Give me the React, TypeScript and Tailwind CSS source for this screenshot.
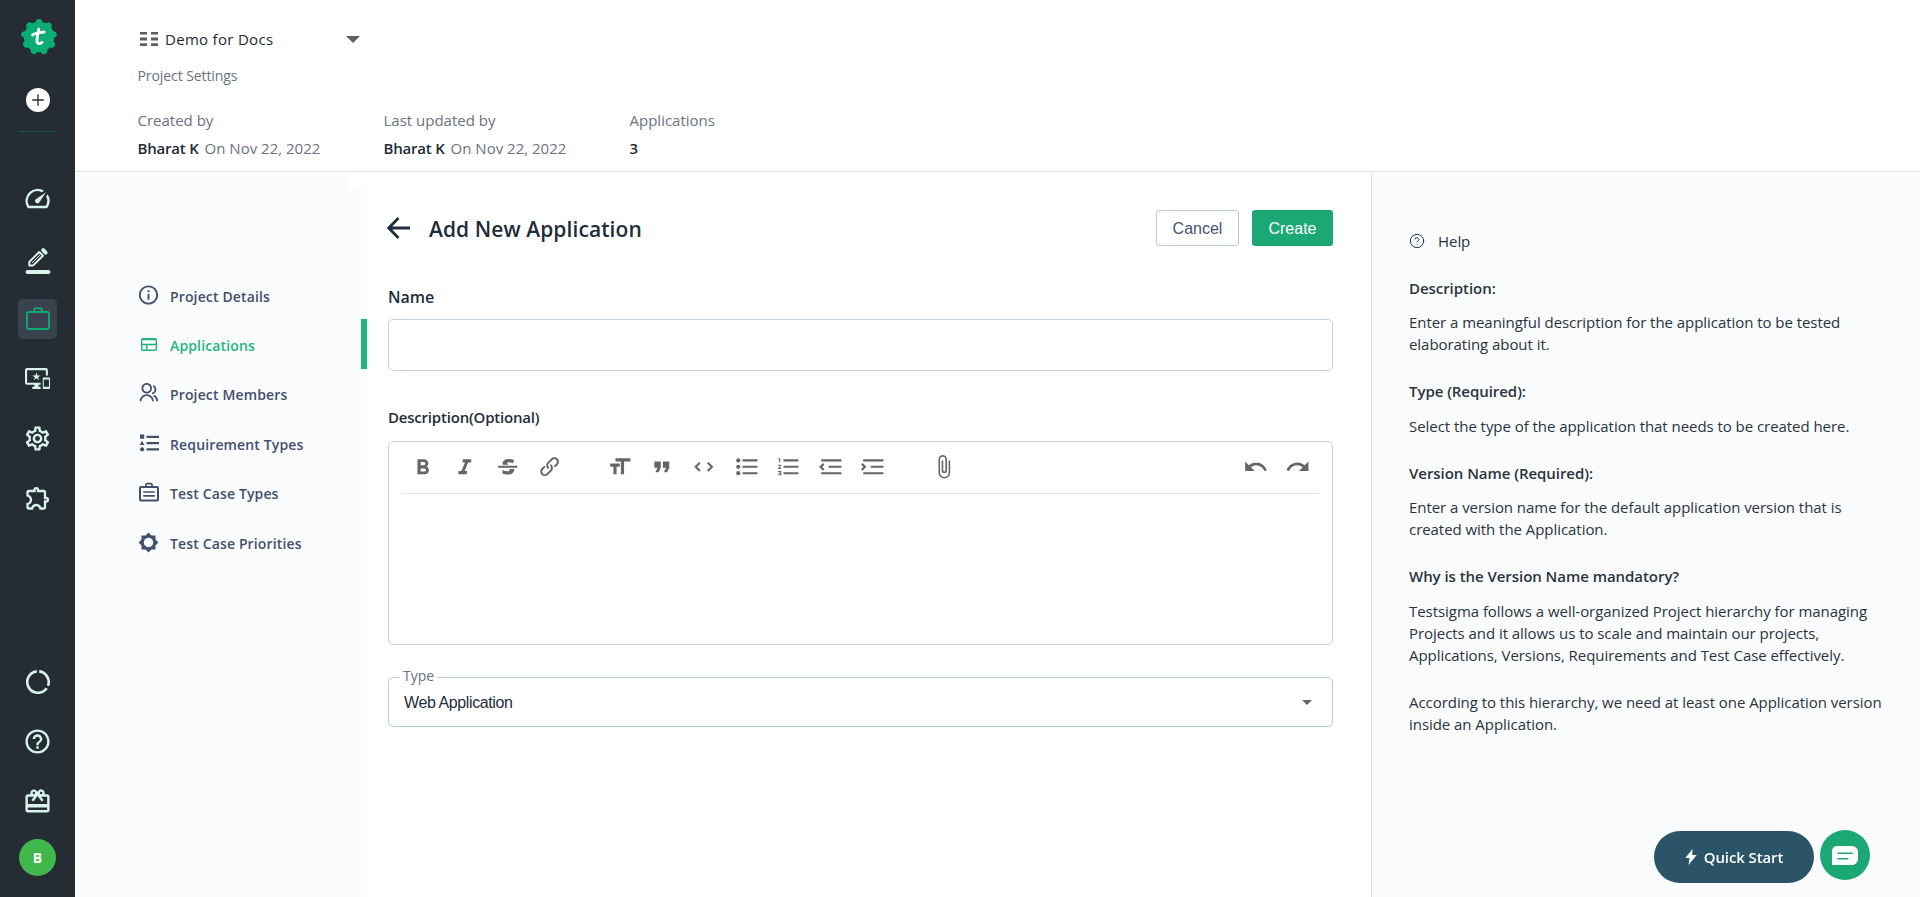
import { ReactNode } from "react";
import { CircleHelp } from "lucide-react";
import {
  MdHelpOutline,
  MdInfoOutline,
  MdOutlineCardGiftcard,
  MdOutlineExtension,
  MdOutlineImportantDevices,
  MdOutlineSettings,
  MdSpeed,
} from "react-icons/md";
import { RiGroupLine } from "react-icons/ri";

const TOOLS: Record<string, string> = {
  bold: "M15.6 11.8c1-.7 1.6-1.8 1.6-2.8a4 4 0 00-4-4H7v14h7c2.1 0 3.7-1.7 3.7-3.8 0-1.5-.8-2.8-2.1-3.4zM10 7.5h3a1.5 1.5 0 110 3h-3v-3zm3.5 9H10v-3h3.5a1.5 1.5 0 110 3z",
  italic: "M10 5v3h2.2l-3.4 8H6v3h8v-3h-2.2l3.4-8H18V5h-8z",
  strike:
    "M12.73 14l.28.14c.26.15.45.3.57.44.12.14.18.3.18.5 0 .3-.15.56-.44.75-.3.2-.76.3-1.39.3A13.52 13.52 0 017 14.95v3.37a10.64 10.64 0 004.84.88c1.26 0 2.35-.19 3.28-.56.93-.37 1.64-.9 2.14-1.57s.74-1.45.74-2.32c0-.26-.02-.51-.06-.75h-5.21zm-5.5-4c-.08-.34-.12-.7-.12-1.1 0-1.29.52-2.3 1.58-3.02 1.05-.72 2.5-1.08 4.34-1.08 1.62 0 3.28.34 4.97 1l-1.3 2.93c-1.47-.6-2.73-.9-3.8-.9-.55 0-.96.08-1.2.26-.26.17-.38.38-.38.64 0 .27.16.52.48.74.17.12.53.3 1.05.53H7.23zM3 13h18v-2H3v2z",
  link: "M9.88 13.7a4.3 4.3 0 010-6.07l3.37-3.37a4.26 4.26 0 016.07 0 4.3 4.3 0 010 6.06l-1.96 1.72a.91.91 0 11-1.3-1.3l1.97-1.71a2.46 2.46 0 00-3.48-3.48l-3.38 3.37a2.46 2.46 0 000 3.48.91.91 0 11-1.3 1.3zM4.25 19.46a4.3 4.3 0 010-6.07l1.93-1.9a.91.91 0 111.3 1.3l-1.93 1.9a2.46 2.46 0 003.48 3.48l3.37-3.38c.96-.96.96-2.52 0-3.48a.91.91 0 111.3-1.3 4.3 4.3 0 010 6.07l-3.38 3.38a4.26 4.26 0 01-6.07 0z",
  heading: "M12 9v3H9v7H6v-7H3V9h9zM8 4h14v3h-6v12h-3V7H8V4z",
  quote: "M6 17h3l2-4V7H5v6h3zm8 0h3l2-4V7h-6v6h3z",
  code: "M18.2 12L15 15.2l1.4 1.4L21 12l-4.6-4.6L15 8.8l3.2 3.2zM5.8 12L9 8.8 7.6 7.4 3 12l4.6 4.6L9 15.2 5.8 12z",
  bullets:
    "M4 4a2 2 0 100 4 2 2 0 000-4zm0 6a2 2 0 100 4 2 2 0 000-4zm0 6a2 2 0 100 4 2 2 0 000-4zm4 3h14v-2H8v2zm0-6h14v-2H8v2zm0-8v2h14V5H8z",
  numbers:
    "M2 17h2v.5H3v1h1v.5H2v1h3v-4H2v1zm1-9h1V4H2v1h1v3zm-1 3h1.8L2 13.1v.9h3v-1H3.2L5 10.9V10H2v1zm5-6v2h14V5H7zm0 14h14v-2H7v2zm0-6h14v-2H7v2z",
  outdent:
    "M3 19h19v-2H3v2zm7-6h12v-2H10v2zm-8.3-.3l2.8 2.9L6 14.2 4 12l2-2-1.4-1.5L1 12l.7.7zM3 5v2h19V5H3z",
  indent:
    "M3 19h19v-2H3v2zm7-6h12v-2H10v2zm-6.9-1L1 14.2l1.4 1.4L6 12l-.7-.7-2.8-2.8L1 9.9 3.1 12zM3 5v2h19V5H3z",
  attach:
    "M16.5 6v11.5a4 4 0 11-8 0V5a2.5 2.5 0 015 0v10.5a1 1 0 11-2 0V6H10v9.5a2.5 2.5 0 005 0V5a4 4 0 10-8 0v12.5a5.5 5.5 0 0011 0V6h-1.5z",
  undo: "M12.5 8c-2.6 0-5 1-6.9 2.6L2 7v9h9l-3.6-3.6A8 8 0 0120 16l2.4-.8a10.5 10.5 0 00-10-7.2z",
  redo: "M18.4 10.6a10.5 10.5 0 00-16.9 4.6L4 16a8 8 0 0112.7-3.6L13 16h9V7l-3.6 3.6z",
};

function Tool({ name }: { name: string }) {
  return (
    <button className="flex w-[42.2px] shrink-0 justify-center">
      <svg viewBox="0 0 24 24" className="size-[25.6px] fill-[#666666]">
        <path d={TOOLS[name]} />
      </svg>
    </button>
  );
}

function SideItem({ className = "", children }: { className?: string; children: ReactNode }) {
  return <div className={`flex size-10 shrink-0 items-center justify-center ${className}`}>{children}</div>;
}

function Logo() {
  const petals = [0, 40, 80, 120, 160, 200, 240, 280, 320];
  return (
    <svg viewBox="-18 -18 36 36" className="mt-px ml-[3px] size-9 shrink-0">
      <circle r="15.2" fill="#0aad74" />
      {petals.map((a) => (
        <circle key={a} cx="0" cy="-14.8" r="3.2" fill="#0aad74" transform={`rotate(${a})`} />
      ))}
      <path
        d="M-6.4-2C-5.4-3.8-2-4 5-5M-.2-7.8C-1.2-3.6-2-.4-2 3.4-2 7.4 1 7.2 3 5.4"
        fill="none"
        stroke="#fff"
        strokeWidth="2.9"
        strokeLinecap="round"
      />
    </svg>
  );
}

function Sidebar() {
  return (
    <aside className="flex w-[75px] shrink-0 flex-col items-center bg-[#252c34] pt-4 text-[#d9f3ea]">
      <SideItem>
        <Logo />
      </SideItem>
      <SideItem className="mt-6">
        <span className="flex size-6 items-center justify-center rounded-full bg-white">
          <svg viewBox="0 0 12 12" className="size-3 stroke-[#252c34]" strokeWidth="1.3">
            <path d="M6 .2v11.6M.2 6h11.6" />
          </svg>
        </span>
      </SideItem>
      <div className="mt-[11px] h-px w-[39px] bg-[#0d5646]" />
      <SideItem className="mt-[46px]">
        <MdSpeed size={29} />
      </SideItem>
      <SideItem className="mt-[23px]">
        <svg viewBox="0 0 26 28" className="h-7 w-[26px]" fill="none" stroke="currentColor">
          <path d="M4.3 18.6v-3.7L14.2 5l3.7 3.7-9.9 9.9z" strokeWidth="2" strokeLinejoin="round" />
          <path d="M7 16L15 8" strokeWidth="1" />
          <path d="M18.2 3.2l2.4 2.4" strokeWidth="4" strokeLinecap="round" />
          <path d="M2.5 25h21" strokeWidth="4" strokeLinecap="round" />
        </svg>
      </SideItem>
      <div className="mt-[18px] flex h-10 w-[39px] items-center justify-center rounded-[5px] bg-[#3a414f] text-[#0aad74]">
        <svg viewBox="0 0 24 24" className="size-6" fill="none" stroke="currentColor" strokeWidth="1.8">
          <rect x="1" y="5" width="22" height="17" rx="1.5" />
          <path d="M8.2 5V2.6c0-.8.5-1.3 1.3-1.3h5c.8 0 1.3.5 1.3 1.3V5" />
        </svg>
      </div>
      <SideItem className="mt-[19px]">
        <MdOutlineImportantDevices size={25} />
      </SideItem>
      <SideItem className="mt-5">
        <MdOutlineSettings size={29} />
      </SideItem>
      <SideItem className="mt-5">
        <MdOutlineExtension size={28} />
      </SideItem>
      <div className="grow" />
      <SideItem>
        <svg viewBox="-12 -12 24 24" className="size-6" fill="none" stroke="currentColor" strokeWidth="2.6">
          <path d="M1.2-10.6A10.7 10.7 0 0 1 10 3.8M8.7 6.2A10.7 10.7 0 1 1-1.2-10.6" />
        </svg>
      </SideItem>
      <SideItem className="mt-[19px]">
        <MdHelpOutline size={29} />
      </SideItem>
      <SideItem className="mt-5">
        <MdOutlineCardGiftcard size={29} />
      </SideItem>
      <SideItem className="mt-4 mb-5">
        <span className="flex size-[37px] items-center justify-center rounded-full bg-[#41b84b] text-[14px] font-bold text-white">
          B
        </span>
      </SideItem>
    </aside>
  );
}

function Author({ label }: { label: string }) {
  return (
    <div className="w-[246px]">
      <div className="h-6 leading-6">{label}</div>
      <div className="mt-1 flex h-6 gap-[6px] leading-6">
        <span className="font-semibold tracking-[-0.2px] text-[#212b36]">Bharat K</span>
        <span>On Nov 22, 2022</span>
      </div>
    </div>
  );
}

function Header() {
  return (
    <header className="h-[172px] shrink-0 border-b border-[#e1e3e6] bg-white pt-[27px] pl-[62.5px] text-[15px] text-[#6b7280]">
      <div className="flex h-6 items-center text-[#212b36]">
        <svg viewBox="0 0 18 14" className="mr-[7px] ml-[2.5px] h-[14px] w-[18px] fill-[#5f5f5f]">
          <path d="M0 0h7v2.6H0zM11 0h7v2.6h-7zM0 5.6h7v2.8H0zM11 5.6h7v2.8h-7zM0 11.3h7v2.7H0zM11 11.3h7v2.7h-7z" />
        </svg>
        <span className="tracking-[0.3px]">Demo for Docs</span>
        <svg viewBox="0 0 14 7" className="ml-[73px] h-[7px] w-[14px] fill-[#5f5f5f]">
          <path d="M0 0h14L7 7z" />
        </svg>
      </div>
      <div className="mt-[15px] h-5 text-[14px] leading-5 tracking-[-0.08px]">Project Settings</div>
      <div className="mt-[22px] flex">
        <Author label="Created by" />
        <Author label="Last updated by" />
        <div>
          <div className="h-6 leading-6">Applications</div>
          <div className="mt-1 h-6 leading-6 font-semibold text-[#212b36]">3</div>
        </div>
      </div>
    </header>
  );
}

const NAV = [
  { label: "Project Details", icon: <MdInfoOutline size={24} /> },
  {
    label: "Applications",
    active: true,
    icon: (
      <svg viewBox="0 0 16 13" className="mt-px h-[13px] w-4" fill="none" stroke="currentColor" strokeWidth="1.4">
        <rect x=".7" y=".7" width="14.6" height="11.6" rx="1" />
        <path d="M.7 1.5h14.6M.7 6.5h14.6M5.8 6.5v6" />
      </svg>
    ),
  },
  { label: "Project Members", icon: <RiGroupLine size={21} className="mb-px" /> },
  {
    label: "Requirement Types",
    icon: (
      <svg viewBox="0 0 20 18" className="h-[18px] w-5 fill-current">
        <path d="M1 .5h4.2v4.2H1zM3.1 6.7l2.4 4.3H.7zM7.5 1.8H20V4H7.5zM7.5 8H20v2.2H7.5zM7.5 14.2H20v2.2H7.5z" />
        <circle cx="3.1" cy="15.3" r="2.1" />
      </svg>
    ),
  },
  {
    label: "Test Case Types",
    icon: (
      <svg viewBox="0 0 20 20" className="size-5" fill="none" stroke="currentColor" strokeWidth="2">
        <rect x="1" y="5" width="18" height="13.5" rx="1" />
        <path d="M7 5V2.8c0-.8.4-1.2 1.2-1.2h3.6c.8 0 1.2.4 1.2 1.2V5M4.2 10h11.6M4.2 13.8h11.6" strokeWidth="1.7" />
      </svg>
    ),
  },
  {
    label: "Test Case Priorities",
    icon: (
      <svg viewBox="0 0 24 24" className="mt-[2px] size-[21px]">
        <path
          d="M20 15.3L23.3 12 20 8.7V4h-4.7L12 .7 8.7 4H4v4.7L.7 12 4 15.3V20h4.7l3.3 3.3 3.3-3.3H20z"
          fill="currentColor"
        />
        <circle cx="12" cy="12" r="5.4" fill="#fafbfd" />
      </svg>
    ),
  },
];

function ProjectNav() {
  return (
    <div className="flex w-[292px] shrink-0 flex-col bg-[#fafbfd]">
      <div className="ml-auto h-[17px] w-[17px] bg-white" />
      <nav className="pt-[81px]">
        {NAV.map((item) => (
          <div
            key={item.label}
            className={
              item.active
                ? "flex h-[49.4px] items-center border-r-[6px] border-[#1fb57e] pl-[62px] text-[#1fb57e]"
                : "flex h-[49.4px] items-center pl-[62px] text-[#43506b]"
            }
          >
            <span className="flex w-[23px] justify-center">{item.icon}</span>
            <span className="ml-[10px] pt-[3px] text-[14px] font-semibold tracking-[0.14px]">{item.label}</span>
          </div>
        ))}
      </nav>
    </div>
  );
}

function ApplicationForm() {
  return (
    <main className="flex grow flex-col pt-[38px] pr-[38px] pl-[21px] text-[#1f2d3a]">
      <div className="flex h-9 items-center">
        <svg viewBox="0 0 23 22" className="-ml-px h-[22px] w-[23px]" fill="none" stroke="currentColor" strokeWidth="2.8">
          <path d="M11.5 1L1.8 11l9.7 10M2 11h21" />
        </svg>
        <h1 className="ml-[19px] grow pt-[3px] text-[21px] font-semibold tracking-[0.08px]">Add New Application</h1>
        <button className="h-9 w-[83px] rounded-[3px] border border-[#b9cad8] pt-px font-['Liberation_Sans',sans-serif] text-base text-[#475270]">
          Cancel
        </button>
        <button className="ml-[13px] h-9 w-[81px] rounded-[3px] bg-[#1ba875] pt-px font-['Liberation_Sans',sans-serif] text-base text-white">
          Create
        </button>
      </div>
      <label className="mt-[39px] h-6 text-[16px] leading-6 font-semibold">Name</label>
      <input className="mt-[10px] h-[52px] rounded-[5px] border border-[#c3d2de]" />
      <label className="mt-[34px] h-6 text-[15px] leading-6 font-semibold tracking-[-0.2px]">
        Description(Optional)
      </label>
      <div className="mt-[12px] h-[204px] rounded-[5px] border border-[#c3d2de] px-[13px]">
        <div className="flex h-[52px] items-center border-b border-[#e0e2e5] pb-px">
          <Tool name="bold" />
          <Tool name="italic" />
          <Tool name="strike" />
          <Tool name="link" />
          <span className="w-[28px]" />
          <Tool name="heading" />
          <Tool name="quote" />
          <Tool name="code" />
          <Tool name="bullets" />
          <Tool name="numbers" />
          <Tool name="outdent" />
          <Tool name="indent" />
          <span className="w-[29px]" />
          <Tool name="attach" />
          <span className="grow" />
          <Tool name="undo" />
          <Tool name="redo" />
        </div>
      </div>
      <div className="relative mt-8 flex h-[50px] items-center rounded-[5px] border border-[#b7cbd8] pr-5 pl-[15px]">
        <span className="absolute -top-[14px] left-[11px] bg-white px-[3px] text-[14px] leading-6 font-medium text-[#66718d]">
          Type
        </span>
        <span className="grow pt-[2px] font-['Liberation_Sans',sans-serif] text-base tracking-[-0.4px]">
          Web Application
        </span>
        <svg viewBox="0 0 10 5" className="h-[5px] w-[10px] fill-[#666666]">
          <path d="M0 0h10L5 5z" />
        </svg>
      </div>
    </main>
  );
}

function HelpPanel() {
  return (
    <aside className="w-[549px] shrink-0 border-l border-[#e1e3e6] bg-[#fafbfd] pt-[57px] pl-[37px] text-[15px] leading-[22px] tracking-[-0.05px] text-[#2b333d]">
      <div className="flex h-6 items-center">
        <CircleHelp size={16} strokeWidth={1.5} />
        <span className="ml-[13px]">Help</span>
      </div>
      <h3 className="mt-6 font-semibold">Description:</h3>
      <p className="mt-3">
        Enter a meaningful description for the application to be tested
        <br />
        elaborating about it.
      </p>
      <h3 className="mt-[25px] font-semibold">Type (Required):</h3>
      <p className="mt-[13px]">Select the type of the application that needs to be created here.</p>
      <h3 className="mt-[25px] font-semibold">Version Name (Required):</h3>
      <p className="mt-3">
        Enter a version name for the default application version that is
        <br />
        created with the Application.
      </p>
      <h3 className="mt-[25px] font-semibold">Why is the Version Name mandatory?</h3>
      <p className="mt-[13px]">
        Testsigma follows a well-organized Project hierarchy for managing
        <br />
        Projects and it allows us to scale and maintain our projects,
        <br />
        Applications, Versions, Requirements and Test Case effectively.
      </p>
      <p className="mt-[25px]">
        According to this hierarchy, we need at least one Application version
        <br />
        inside an Application.
      </p>
    </aside>
  );
}

export default function App() {
  return (
    <div className="flex h-[897px] w-[1920px] overflow-hidden bg-white font-['Open_Sans','Noto_Sans',sans-serif]">
      <Sidebar />
      <div className="flex grow flex-col">
        <Header />
        <div className="flex grow">
          <ProjectNav />
          <ApplicationForm />
          <HelpPanel />
        </div>
      </div>
      {/* Floating actions */}
      <div className="fixed right-[50px] bottom-[14px] flex items-start gap-[6px]">
        <button className="mt-px flex h-[52px] w-40 items-center justify-center rounded-full bg-[#2c5468] text-[15px] font-semibold tracking-[-0.1px] text-white">
          <svg viewBox="0 0 12 16" className="mr-[7px] h-4 w-3 fill-white">
            <path d="M7.5 0L.3 9h4.2L3.5 16 11.7 6H7.2z" />
          </svg>
          <span className="pt-px">Quick Start</span>
        </button>
        <button className="flex size-[50px] items-center justify-center rounded-full bg-[#1ba875]">
          <svg viewBox="0 0 26 19" className="h-[19px] w-[26px]">
            <path d="M5 0h15a6 6 0 0 1 6 6v7a6 6 0 0 1-6 6H0V5a5 5 0 0 1 5-5z" fill="#fff" />
            <path d="M6 7.2h14.5M6 12.8h10" stroke="#1ba875" strokeWidth="1.4" strokeLinecap="round" />
          </svg>
        </button>
      </div>
    </div>
  );
}
